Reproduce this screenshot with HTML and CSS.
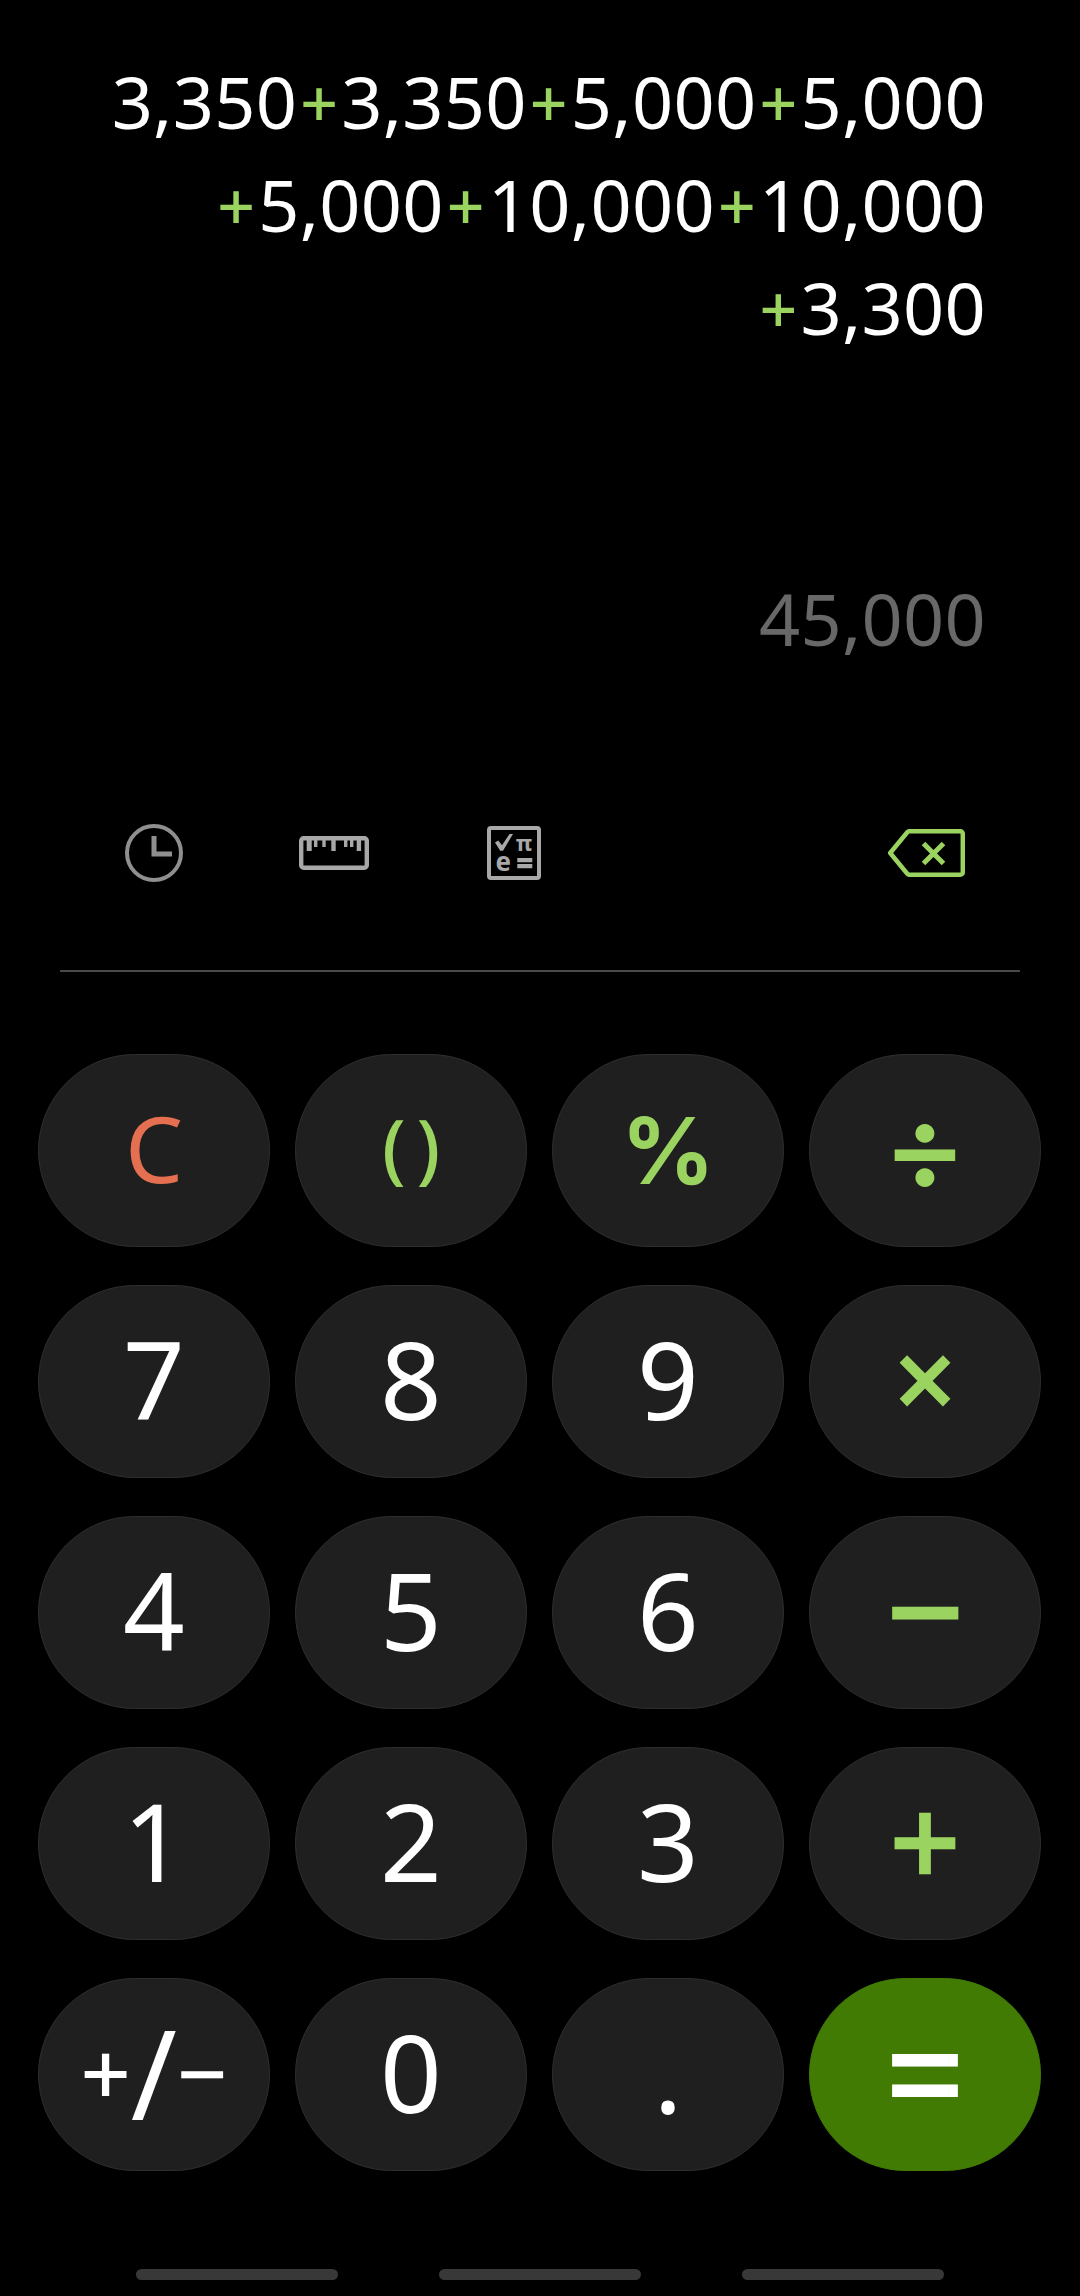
FILE: index.html
```html
<!DOCTYPE html>
<html lang="en">
<head>
<meta charset="utf-8">
<title>Calculator</title>
<link rel="stylesheet" href="styles.css">
</head>
<body>
<main class="app">
  <section class="display">
    <div class="line">3,350<span class="plus">+</span>3,350<span class="plus">+</span>5,000<span class="plus">+</span>5,000</div>
    <div class="line"><span class="plus">+</span>5,000<span class="plus">+</span>10,000<span class="plus">+</span>10,000</div>
    <div class="line"><span class="plus">+</span>3,300</div>
    <div class="line result">45,000</div>
  </section>
  <section class="tools">
    <svg class="ico ico-clock" viewBox="0 0 58 58"><circle cx="29" cy="29" r="27" fill="none" stroke="#8f8f8f" stroke-width="4"/><path d="M26.500 12h5v15.500H47v5H26.500z" fill="#8f8f8f"/></svg>
    <svg class="ico ico-ruler" viewBox="0 0 70 34"><rect x="2.200" y="2.200" width="65.600" height="29.600" rx="2.500" fill="none" stroke="#a8a8a8" stroke-width="4.400"/><path d="M7.700 3h5v12h-5zM15 3h3.400v8H15zM23.300 3h3.400v8h-3.400zM32.300 3h4.400v12h-4.400zM45 3h3.400v8H45zM51 3h3.400v8H51zM57.700 3h4.400v12h-4.400z" fill="#a8a8a8"/></svg>
    <svg class="ico ico-sci" viewBox="0 0 54 54"><rect x="2" y="2" width="50" height="50" rx="2" fill="none" stroke="#a8a8a8" stroke-width="4"/><path d="M8 16.500l3.200-2 3.800 4.800L22.500 8H26L16 24.700h-2.800z" fill="#a8a8a8"/><path d="M30.300 32h15v4.300h-15zM30.300 38h15v4.300h-15z" fill="#a8a8a8"/><text class="sci-pi" x="37" y="25" text-anchor="middle">π</text><text class="sci-e" x="16.300" y="44.500" text-anchor="middle">e</text></svg>
    <span class="spacer"></span>
    <svg class="ico ico-back" viewBox="0 0 78 48"><path d="M22 2.300h51.300a2.500 2.500 0 0 1 2.500 2.500v38.400a2.500 2.500 0 0 1-2.500 2.500H22a2 2 0 0 1-1.500-.7L3.200 24 20.500 3A2 2 0 0 1 22 2.300z" fill="none" stroke="#9ad35f" stroke-width="4.500" stroke-linejoin="round"/><path d="M36.500 14.500l20 20M56.500 14.500l-20 20" fill="none" stroke="#9ad35f" stroke-width="5"/></svg>
  </section>
  <div class="rule"></div>
  <section class="keys">
    <button class="key clear">C</button>
    <button class="key accent paren">( )</button>
    <button class="key accent pct">%</button>
    <button class="key accent sym-div">÷</button>
    <button class="key">7</button>
    <button class="key">8</button>
    <button class="key">9</button>
    <button class="key accent sym-mul">×</button>
    <button class="key">4</button>
    <button class="key">5</button>
    <button class="key">6</button>
    <button class="key accent sym-minus">−</button>
    <button class="key">1</button>
    <button class="key">2</button>
    <button class="key">3</button>
    <button class="key accent sym-plus">+</button>
    <button class="key sign">+<span class="slash">/</span>−</button>
    <button class="key">0</button>
    <button class="key">.</button>
    <button class="key equals"><span class="eq">=</span></button>
  </section>
  <nav class="nav">
    <span class="pill"></span>
    <span class="pill"></span>
    <span class="pill"></span>
  </nav>
</main>
</body>
</html>
```
FILE: styles.css
```css
* { box-sizing: border-box; }
html, body { margin: 0; padding: 0; background: #000; }
body { width: 1080px; height: 2296px; overflow: hidden; font-family: "Noto Sans", sans-serif; }
.app { display: flex; flex-direction: column; height: 2296px; }
.display { height: 758px; padding: 50px 94px 0 0; display: flex; flex-direction: column; align-items: flex-end; }
.line { font-size: 72px; font-weight: 400; line-height: 103px; color: #fff; letter-spacing: 0.3px; white-space: nowrap; }
.plus { color: #9ad35f; font-size: 66px; font-weight: 500; line-height: 1; padding: 0 3px; vertical-align: 2px; }
.result { margin-top: 208px; color: #686868; }
.tools { display: flex; align-items: center; height: 190px; padding-left: 125px; padding-right: 115px; flex: none; }
.ico { display: block; flex: none; }
.ico-clock { width: 58px; height: 58px; margin-right: 116px; }
.ico-ruler { width: 70px; height: 34px; margin-right: 118px; }
.ico-sci { width: 54px; height: 54px; }
.ico-back { width: 78px; height: 48px; }
.sci-pi, .sci-e { fill: #a8a8a8; font-family: "Noto Sans", sans-serif; font-weight: 700; }
.sci-pi { font-size: 22px; }
.sci-e { font-size: 26px; }
.spacer { flex: 1; }
.rule { height: 2px; margin: 22px 60px 0; background: #4a4a4a; flex: none; }
.keys { display: grid; grid-template-columns: repeat(4, 232px); grid-auto-rows: 193px; column-gap: 25px; row-gap: 38px; padding: 82px 0 0 38px; }
.key { display: flex; align-items: center; justify-content: center; padding: 0 0 6px; border: 1px solid #2e2e2e; border-radius: 97px; background: #1f1f1f; color: #fff; font-family: "Noto Sans", sans-serif; font-size: 108px; line-height: 1; }
.accent { color: #9ad35f; }
.clear { color: #e56f51; font-size: 92px; }
.paren { font-size: 76px; font-weight: 500; word-spacing: -9px; padding-bottom: 10px; }
.pct { font-family: Inter, sans-serif; font-size: 92px; font-weight: 700; padding-bottom: 0; }
.sym-div { font-family: Lato, sans-serif; font-size: 124px; font-weight: 700; padding-bottom: 4px; }
.sym-mul { font-family: "DejaVu Sans", sans-serif; font-size: 80px; -webkit-text-stroke: 4px #9ad35f; }
.sym-minus { font-family: "DejaVu Sans", sans-serif; font-size: 98px; -webkit-text-stroke: 4.8px #9ad35f; }
.sym-plus { font-family: "DejaVu Sans", sans-serif; font-size: 90px; -webkit-text-stroke: 4.4px #9ad35f; }
.sign { font-size: 88px; font-weight: 500; }
.slash { font-size: 124px; font-weight: 400; line-height: 0; vertical-align: -14px; }
.equals { background: #417b04; border-color: #417b04; font-family: "DejaVu Sans", sans-serif; font-size: 105px; }
.eq { display: block; transform: scaleY(1.45); }
.nav { display: flex; justify-content: center; gap: 101px; margin-top: 98px; }
.pill { width: 202px; height: 11px; border-radius: 6px; background: #383838; }
```
